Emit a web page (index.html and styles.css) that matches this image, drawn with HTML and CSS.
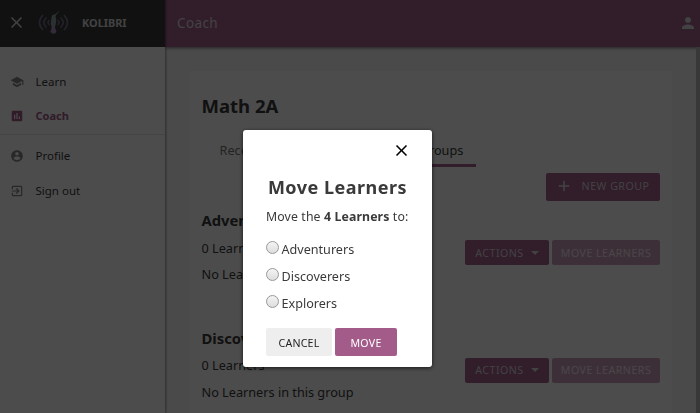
FILE: index.html
```html
<!DOCTYPE html>
<html lang="en">
<head>
<meta charset="utf-8">
<title>Kolibri</title>
<link rel="stylesheet" href="styles.css">
</head>
<body>
<div class="app">
  <aside class="sidebar">
    <div class="brand">
      <svg class="brand-close" viewBox="0 0 24 24"><path d="M19 6.4L17.6 5 12 10.600 6.400 5 5 6.400 10.600 12 5 17.600 6.400 19 12 13.400 17.600 19 19 17.600 13.400 12z"/></svg>
      <svg class="logo" viewBox="0 0 32 26">
        <g class="waves">
          <path d="M5 5Q-2 12.500 5 20M8.500 7.500Q3 12.500 8.500 17.500M11.500 10Q8.500 12.500 11.500 15M26 5Q33 12.500 26 20M22.500 7.500Q28 12.500 22.500 17.500M19.500 10Q22.500 12.500 19.500 15"/>
        </g>
        <path class="bird" d="M22.500 1Q18.500 2 17 4.500Q13.500 4 13.500 8Q12 13 13.500 17L17 17Q19 11 17.500 6Q18.500 3 22.500 1Z"/>
        <path class="tail" d="M14 16H16.500L18.500 22Q15.500 25.500 12.500 22Z"/>
      </svg>
      <span class="brand-name">KOLIBRI</span>
    </div>
    <nav class="nav">
      <a class="nav-item"><svg viewBox="0 0 24 24"><path d="M5 13.180v4L12 21l7-3.820v-4L12 17l-7-3.820zM12 3L1 9l11 6 9-4.910V17h2V9L12 3z"/></svg><span>Learn</span></a>
      <a class="nav-item active"><svg viewBox="0 0 24 24"><path d="M19 3H5c-1.100 0-2 .9-2 2v14c0 1.100.9 2 2 2h14c1.100 0 2-.9 2-2V5c0-1.100-.9-2-2-2zM9 17H7v-7h2v7zm4 0h-2V7h2v10zm4 0h-2v-4h2v4z"/></svg><span>Coach</span></a>
      <hr class="nav-divider">
      <a class="nav-item"><svg viewBox="0 0 24 24"><path d="M12 2C6.480 2 2 6.480 2 12s4.480 10 10 10 10-4.480 10-10S17.520 2 12 2zm0 3c1.660 0 3 1.340 3 3s-1.340 3-3 3-3-1.340-3-3 1.340-3 3-3zm0 14.200c-2.500 0-4.710-1.280-6-3.220.03-1.990 4-3.080 6-3.080 1.990 0 5.970 1.090 6 3.080-1.290 1.940-3.500 3.220-6 3.220z"/></svg><span>Profile</span></a>
      <a class="nav-item"><svg viewBox="0 0 24 24"><path d="M10.090 15.590L11.500 17l5-5-5-5-1.410 1.410L12.670 11H3v2h9.670l-2.580 2.590zM19 3H5a2 2 0 0 0-2 2v4h2V5h14v14H5v-4H3v4a2 2 0 0 0 2 2h14c1.100 0 2-.9 2-2V5c0-1.100-.9-2-2-2z"/></svg><span>Sign out</span></a>
    </nav>
  </aside>
  <div class="page">
    <header class="topbar">
      <span class="topbar-title">Coach</span>
      <svg viewBox="0 0 24 24"><path d="M12 12c2.210 0 4-1.790 4-4s-1.790-4-4-4-4 1.790-4 4 1.790 4 4 4zm0 2c-2.670 0-8 1.340-8 4v2h16v-2c0-2.660-5.330-4-8-4z"/></svg>
    </header>
    <main class="content">
      <section class="card">
        <h1>Math 2A</h1>
        <div class="tabs"><span class="tab">Recent</span><span class="tab current">Groups</span></div>
        <div class="toolbar"><button class="btn new"><svg viewBox="0 0 24 24"><path d="M19 13h-6v6h-2v-6H5v-2h6V5h2v6h6v2z"/></svg>NEW GROUP</button></div>
        <div class="group">
          <h2>Adventurers</h2>
          <div class="group-row"><span>0 Learners</span><div class="group-actions"><button class="btn actions">ACTIONS<i class="caret"></i></button><button class="btn disabled">MOVE LEARNERS</button></div></div>
          <p>No Learners in this group</p>
        </div>
        <div class="group">
          <h2>Discoverers</h2>
          <div class="group-row"><span>0 Learners</span><div class="group-actions"><button class="btn actions">ACTIONS<i class="caret"></i></button><button class="btn disabled">MOVE LEARNERS</button></div></div>
          <p>No Learners in this group</p>
        </div>
      </section>
    </main>
  </div>
  <div class="scrollbar"></div>
</div>
<div class="overlay">
  <form class="modal">
    <svg class="modal-close" viewBox="0 0 24 24"><path d="M19 6.400L17.600 5 12 10.600 6.400 5 5 6.400 10.600 12 5 17.600 6.400 19 12 13.400 17.600 19 19 17.600 13.400 12z"/></svg>
    <h3>Move Learners</h3>
    <p class="prompt">Move the <b>4 Learners</b> to:</p>
    <label class="option"><input type="radio" name="group"><span>Adventurers</span></label>
    <label class="option"><input type="radio" name="group"><span>Discoverers</span></label>
    <label class="option"><input type="radio" name="group"><span>Explorers</span></label>
    <div class="modal-buttons"><button type="button" class="btn cancel">CANCEL</button><button type="button" class="btn move">MOVE</button></div>
  </form>
</div>
</body>
</html>
```
FILE: styles.css
```css
* { box-sizing: border-box; }
body { margin: 0; height: 413px; overflow: hidden; font: 12.700px/20px "Noto Sans", sans-serif; color: #3a3a3a; }
svg { display: block; flex: none; fill: currentColor; }
h1, h2, h3, p { margin: 0; }

.app { display: flex; height: 413px; background: #f7f7f7; }
.sidebar { width: 165px; flex: none; background: #fff; box-shadow: 1px 0 2px rgba(0, 0, 0, .4); z-index: 1; }
.brand { display: flex; align-items: center; height: 47px; background: #3a3a3a; color: #dedede; }
.brand-close { width: 19px; height: 19px; margin: 0 14px 0 7px; position: relative; top: -1px; }
.logo { width: 32px; height: 26px; margin: 0 12px 0 -2px; position: relative; top: -1px; }
.waves { fill: none; stroke: #77758f; stroke-width: 1.500; }
.bird { fill: #8ca5a0; }
.tail { fill: #b090c4; }
.brand-name { font-size: 10.900px; font-weight: 700; margin-top: -1px; }
.nav { padding-top: 17.400px; }
.nav-item { display: flex; align-items: center; gap: 12px; height: 34.400px; padding-left: 10px; font-size: 11.500px; color: #3a3a3a; }
.nav-item span { margin-left: -.5px; }
.nav-item svg { width: 14px; height: 14px; color: #858585; }
.nav-item.active { font-weight: 700; font-size: 11px; color: #a35b8a; }
.nav-item.active svg { color: #a35b8a; }
.nav-divider { height: 1px; margin: 1px 0 4px; border: 0; background: #e8e8e8; }

.page { flex: 1; min-width: 0; display: flex; flex-direction: column; }
.topbar { display: flex; align-items: center; justify-content: space-between; height: 47px; flex: none; padding: 0 0 2px 12px; background: #a9618f; color: #ddd; box-shadow: 0 1px 3px rgba(0, 0, 0, .5); margin-right: -4px; }
.topbar-title { font-size: 13.500px; letter-spacing: .4px; }
.topbar svg { width: 18px; height: 18px; margin-right: 3px; }
.content { flex: 1; padding: 24px 24px 0; }
.card { height: 342px; padding: 23px 12px 0 12.500px; background: #fff; overflow: hidden; }
h1 { font-size: 18.500px; line-height: 24px; }
.tabs { display: flex; height: 49px; }
.tab { width: 102px; padding-top: 22px; margin-left: 12px; text-indent: 6px; color: #777; }
.tab.current { width: 68px; margin-left: 92px; border-bottom: 3px solid #a9618f; text-align: center; text-indent: 0; color: #3a3a3a; }
.toolbar { display: flex; justify-content: flex-end; padding-top: 6px; }
.btn { display: flex; align-items: center; justify-content: center; padding: 0; border: 0; border-radius: 2px; background: #a9618f; color: #ddd; font: 10.600px/16px "Noto Sans", sans-serif; letter-spacing: .5px; }
.new { width: 114px; height: 28px; gap: 9px; padding-bottom: 2px; }
.new svg { width: 18px; height: 18px; margin-left: -2px; }
.group { height: 117.500px; padding-top: 9px; }
.group h2 { font-size: 14.800px; line-height: 21px; }
.group-row { display: flex; align-items: center; height: 33px; }
.group-actions { display: flex; gap: 3px; margin-left: auto; position: relative; top: 5px; }
.actions { width: 84px; height: 25px; gap: 7px; }
.caret { border: 4px solid transparent; border-top-color: currentColor; border-bottom: 0; }
.disabled { width: 108px; height: 25px; background: #cc9fbc; color: #f4e8f0; }
.scrollbar { width: 4px; margin-top: 47px; background: #bbb; }

.overlay { position: fixed; inset: 0; z-index: 2; background: rgba(0, 0, 0, .7); padding: 130px 0 0 243px; }
.modal { width: 189px; height: 237px; padding: 11px 23px 0; border-radius: 3px; background: #fff; box-shadow: 0 1px 4px rgba(0, 0, 0, .7); }
.modal-close { width: 19px; height: 19px; margin: 0 -2px 0 auto; color: #000; }
.modal h3 { margin: 15px -5px 0; font-size: 18px; letter-spacing: .5px; line-height: 24px; text-align: center; white-space: nowrap; }
.prompt { margin: 8px 0 9px; font-size: 12.300px; letter-spacing: .12px; white-space: nowrap; }
.option { display: flex; gap: 2.500px; height: 26.800px; padding-top: 4px; font-size: 12.600px; }
.option input { appearance: none; width: 13px; height: 13px; margin: 1px 0 0; border: 1px solid #999; border-radius: 50%; background: linear-gradient(#f4f4f4, #ddd); }
.modal-buttons { display: flex; gap: 3px; margin-top: 11.600px; }
.cancel { width: 66px; height: 28px; padding-top: 2px; background: #eee; color: #222; letter-spacing: .2px; }
.move { width: 62px; height: 28px; padding-top: 2px; background: #a35b8a; color: #fff; letter-spacing: .3px; }
```
